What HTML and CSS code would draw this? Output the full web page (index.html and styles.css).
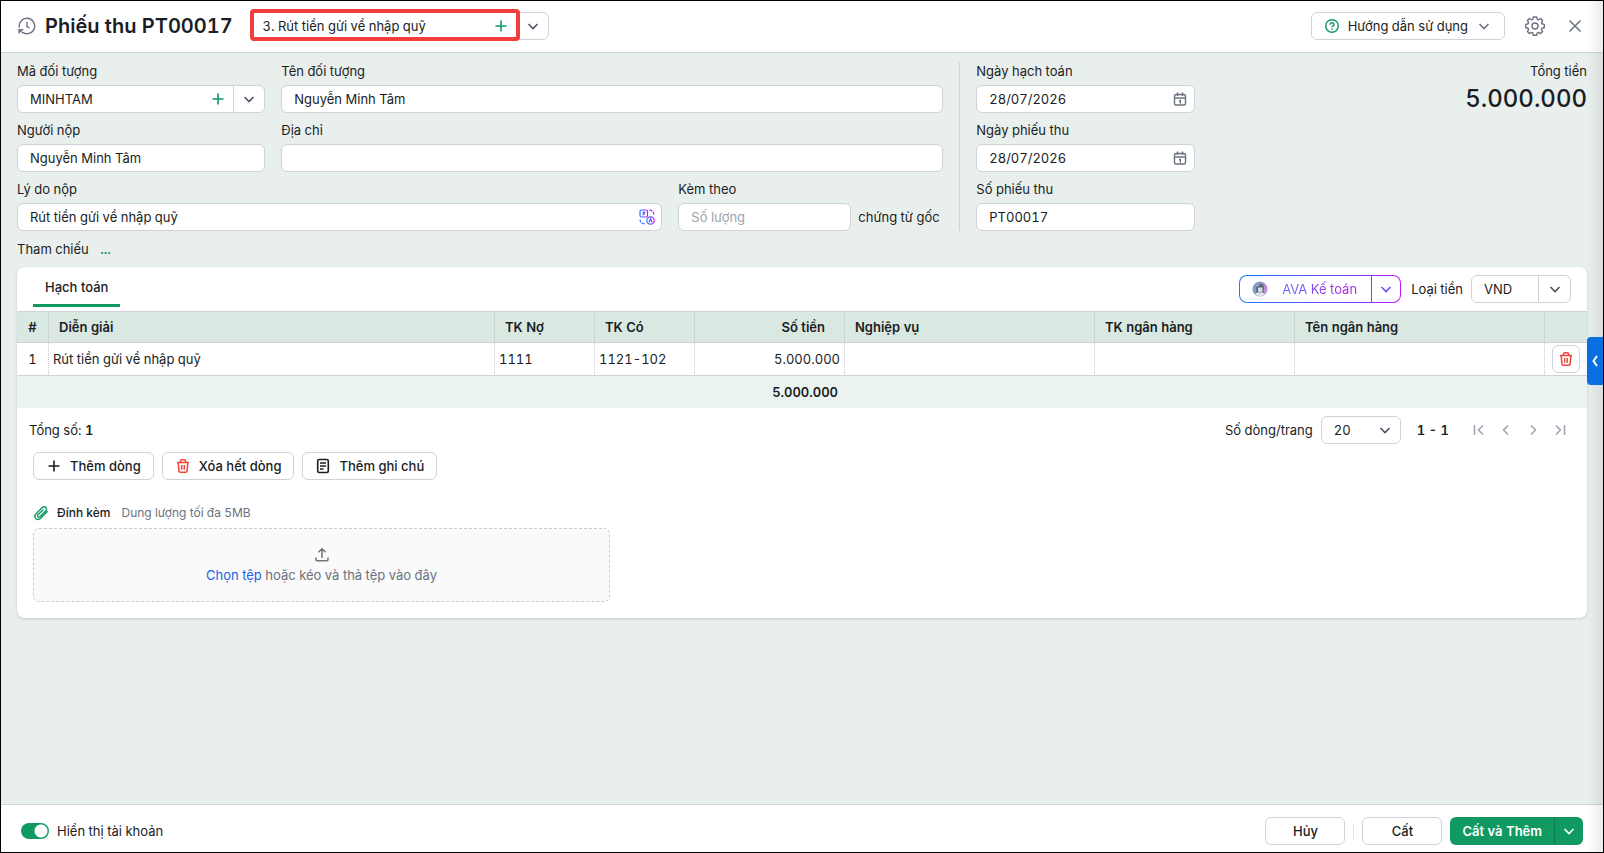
FILE: index.html
```html
<!DOCTYPE html>
<html lang="vi">
<head>
    <meta charset="UTF-8">
    <meta name="viewport" content="width=device-width, initial-scale=1.0">
    <title>Phiếu thu PT00017</title>
    <link rel="stylesheet" href="styles.css">
</head>
<body>
    <!-- Shared icons -->
    <svg class="sprite" aria-hidden="true">
        <defs>
            <linearGradient id="ava" x1="0" y1="0" x2="1" y2="0">
                <stop offset="0" stop-color="#1a7dff"/>
                <stop offset="1" stop-color="#b91aff"/>
            </linearGradient>
        </defs>
        <symbol id="chevron" viewBox="0 0 16 16">
            <path d="M3.5 6l4.500 4.500L12.500 6" fill="none" stroke="currentColor" stroke-width="1.6"/>
        </symbol>
        <symbol id="plus" viewBox="0 0 16 16">
            <path d="M8 2.500v11M2.500 8h11" fill="none" stroke="currentColor" stroke-width="1.600"/>
        </symbol>
        <symbol id="calendar" viewBox="0 0 16 16">
            <g fill="none" stroke="currentColor" stroke-width="1.400">
                <rect x="2.500" y="3.500" width="11" height="10.500" rx="1.500"/>
                <path d="M2.500 7h11M5.500 1.500v3.500M10.500 1.500v3.500M7 9.500h1.300v3"/>
            </g>
        </symbol>
        <symbol id="trash" viewBox="0 0 16 16">
            <g fill="none" stroke="currentColor" stroke-width="1.500">
                <path d="M2 4.500h12M5.500 4.300V3q0-1.300 1.300-1.300h2.400q1.300 0 1.300 1.300v1.300M3.200 4.700l.7 8.200q.1 1.300 1.400 1.300h5.400q1.300 0 1.400-1.300l.7-8.200M6.700 7v4.800M9.300 7v4.800"/>
            </g>
        </symbol>
    </svg>

    <header class="header">
        <button class="icon-btn" aria-label="Lịch sử">
            <svg width="18" height="18" viewBox="0 0 18 18" fill="none" stroke="currentColor" stroke-width="1.4">
                <path d="M1.400 10.500A7.700 7.700 0 1 1 5 15.600M1 16.500v-3.800h4.300M1 12.700q1.500 2.700 5.200 3.700M9 4.800V9.500l2.500 1.500"/>
            </svg>
        </button>
        <h1>Phiếu thu PT00017</h1>
        <div class="type-box">
            <select aria-label="Loại phiếu">
                <option>3. Rút tiền gửi về nhập quỹ</option>
            </select>
            <div class="highlight"></div>
            <button class="add-type" aria-label="Thêm"><svg class="icon"><use href="#plus"/></svg></button>
            <svg class="icon arrow"><use href="#chevron"/></svg>
        </div>
        <div class="header-right">
            <button class="btn help-btn">
                <svg class="icon green" viewBox="0 0 16 16" fill="none" stroke="currentColor" stroke-width="1.4">
                    <circle cx="8" cy="8" r="6.300"/>
                    <path d="M6 6.700q0-2 2-2t2 1.800q0 1-1 1.500t-1 1.300M8 10.600v1.400"/>
                </svg>
                Hướng dẫn sử dụng
                <svg class="icon gray"><use href="#chevron"/></svg>
            </button>
            <button class="icon-btn" aria-label="Thiết lập">
                <svg width="20" height="20" viewBox="0 0 20 20" fill="none" stroke="currentColor" stroke-width="1.4" stroke-linejoin="round">
                    <path d="M8.300 1h3.400l.6 2.300 1.200.5 2.100-1.300 2 2-1.200 2.100.5 1.200 2.400.6v3.300l-2.400.6-.5 1.200 1.200 2.100-2 2-2.100-1.200-1.200.5-.6 2.300H8.300l-.6-2.300-1.200-.5-2.100 1.200-2-2 1.200-2.100-.5-1.200L.8 11.700V8.400l2.300-.6.5-1.200-1.200-2.100 2-2 2.100 1.300 1.200-.5z"/>
                    <circle cx="10" cy="10" r="3"/>
                </svg>
            </button>
            <button class="icon-btn" aria-label="Đóng">
                <svg width="20" height="20" viewBox="0 0 20 20" fill="none" stroke="currentColor" stroke-width="1.5">
                    <path d="M4.500 4.500l11 11M15.500 4.500l-11 11"/>
                </svg>
            </button>
        </div>
    </header>

    <main class="content">
        <section class="form">
            <div class="form-left">
                <div class="row two-cols">
                    <div class="field">
                        <label for="code">Mã đối tượng</label>
                        <div class="control combo">
                            <input type="text" id="code" value="MINHTAM">
                            <button class="plain green" aria-label="Thêm đối tượng"><svg class="icon"><use href="#plus"/></svg></button>
                            <button class="plain drop" aria-label="Chọn đối tượng"><svg class="icon"><use href="#chevron"/></svg></button>
                        </div>
                    </div>
                    <div class="field">
                        <label for="name">Tên đối tượng</label>
                        <input class="control" type="text" id="name" value="Nguyễn Minh Tâm">
                    </div>
                </div>
                <div class="row two-cols">
                    <div class="field">
                        <label for="payer">Người nộp</label>
                        <input class="control" type="text" id="payer" value="Nguyễn Minh Tâm">
                    </div>
                    <div class="field">
                        <label for="address">Địa chỉ</label>
                        <input class="control" type="text" id="address">
                    </div>
                </div>
                <div class="row reason-row">
                    <div class="field">
                        <label for="reason">Lý do nộp</label>
                        <div class="control combo">
                            <input type="text" id="reason" value="Rút tiền gửi về nhập quỹ">
                            <button class="plain" aria-label="Dịch">
                                <svg class="icon" viewBox="0 0 16 16" fill="none" stroke="url(#ava)" stroke-width="1.2">
                                    <rect x="1" y="1" width="7.500" height="7" rx="1.500"/>
                                    <path d="M3.500 3.300h2.500M4.800 3v2.700M3.500 6l2.500-1.500"/>
                                    <circle cx="11.500" cy="11.500" r="3.700"/>
                                    <path d="M10 13.200l1.500-3.500 1.500 3.500"/>
                                    <path d="M10.500 1.200q3.800 0 4.300 4.300M1 10.500q.3 3.800 4.500 4.300" stroke-dasharray="3 1"/>
                                </svg>
                            </button>
                        </div>
                    </div>
                    <div class="field">
                        <label for="docs">Kèm theo</label>
                        <div class="docs">
                            <input class="control" type="text" id="docs" placeholder="Số lượng">
                            <span>chứng từ gốc</span>
                        </div>
                    </div>
                </div>
            </div>
            <div class="form-dates">
                <div class="field">
                    <label for="date1">Ngày hạch toán</label>
                    <div class="control combo">
                        <input type="text" id="date1" value="28/07/2026">
                        <button class="plain gray" aria-label="Chọn ngày"><svg class="icon"><use href="#calendar"/></svg></button>
                    </div>
                </div>
                <div class="field">
                    <label for="date2">Ngày phiếu thu</label>
                    <div class="control combo">
                        <input type="text" id="date2" value="28/07/2026">
                        <button class="plain gray" aria-label="Chọn ngày"><svg class="icon"><use href="#calendar"/></svg></button>
                    </div>
                </div>
                <div class="field">
                    <label for="number">Số phiếu thu</label>
                    <input class="control" type="text" id="number" value="PT00017">
                </div>
            </div>
            <div class="total">
                <div>Tổng tiền</div>
                <div class="total-value">5.000.000</div>
            </div>
        </section>

        <div class="reference">Tham chiếu <a href="#">...</a></div>

        <section class="card">
            <div class="tabs">
                <button class="tab">Hạch toán</button>
                <div class="tabs-right">
                    <div class="ava">
                        <button class="ava-main">
                            <svg class="icon" viewBox="0 0 16 16">
                                <defs>
                                    <linearGradient id="face">
                                        <stop offset="0" stop-color="#6fa3c8"/>
                                        <stop offset="1" stop-color="#c58bd8"/>
                                    </linearGradient>
                                </defs>
                                <circle cx="8" cy="8" r="7.500" fill="url(#face)"/>
                                <path d="M4 7q1-4.500 4.500-4.500T12 7l-.5 5q-3.500 2-7 0z" fill="#5b6878"/>
                                <path d="M6 6.500h4.500v3.500q-2.300 3-4.500 0z" fill="#d8dde3"/>
                                <path d="M3 13l3.500-2 1.500 1.500 1.500-1.500 3.500 2q-5 4-10 0z" fill="#e6ebef"/>
                                <path d="M6.500 8h1.200M8.800 8H10M4.500 5l3-1.500" stroke="#c7d3dc"/>
                            </svg>
                            <span>AVA Kế toán</span>
                        </button>
                        <button class="ava-drop" aria-label="Mở AVA"><svg class="icon"><use href="#chevron"/></svg></button>
                    </div>
                    <label for="currency">Loại tiền</label>
                    <div class="select-box split">
                        <select id="currency"><option>VND</option></select>
                        <svg class="icon arrow"><use href="#chevron"/></svg>
                    </div>
                </div>
            </div>

            <table>
                <colgroup>
                    <col class="col-index">
                    <col>
                    <col class="col-account">
                    <col class="col-account">
                    <col class="col-amount">
                    <col class="col-wide">
                    <col class="col-bank">
                    <col class="col-wide">
                    <col class="col-action">
                </colgroup>
                <thead>
                    <tr>
                        <th class="index">#</th>
                        <th>Diễn giải</th>
                        <th>TK Nợ</th>
                        <th>TK Có</th>
                        <th class="num">Số tiền</th>
                        <th>Nghiệp vụ</th>
                        <th>TK ngân hàng</th>
                        <th>Tên ngân hàng</th>
                        <th></th>
                    </tr>
                </thead>
                <tbody>
                    <tr>
                        <td class="index">1</td>
                        <td>Rút tiền gửi về nhập quỹ</td>
                        <td>1111</td>
                        <td>1121-102</td>
                        <td class="num">5.000.000</td>
                        <td></td>
                        <td></td>
                        <td></td>
                        <td class="action"><button class="btn delete-btn red" aria-label="Xóa dòng"><svg class="icon"><use href="#trash"/></svg></button></td>
                    </tr>
                </tbody>
                <tfoot>
                    <tr>
                        <td colspan="4"></td>
                        <td class="num">5.000.000</td>
                        <td colspan="4"></td>
                    </tr>
                </tfoot>
            </table>

            <div class="pager">
                <div>Tổng số: <b>1</b></div>
                <div class="pager-right">
                    <label for="size">Số dòng/trang</label>
                    <div class="select-box">
                        <select id="size"><option>20</option></select>
                        <svg class="icon arrow"><use href="#chevron"/></svg>
                    </div>
                    <b class="range">1 - 1</b>
                    <div class="pages">
                        <button class="plain" aria-label="Trang đầu"><svg class="icon" viewBox="0 0 16 16"><path d="M3.500 3v10M12 3.500L7.500 8l4.500 4.500"/></svg></button>
                        <button class="plain" aria-label="Trang trước"><svg class="icon" viewBox="0 0 16 16"><path d="M10 3.500L5.500 8l4.500 4.500"/></svg></button>
                        <button class="plain" aria-label="Trang sau"><svg class="icon" viewBox="0 0 16 16"><path d="M6 3.500L10.500 8 6 12.500"/></svg></button>
                        <button class="plain" aria-label="Trang cuối"><svg class="icon" viewBox="0 0 16 16"><path d="M4 3.500L8.500 8 4 12.500M12.500 3v10"/></svg></button>
                    </div>
                </div>
            </div>

            <div class="actions">
                <button class="btn"><svg class="icon"><use href="#plus"/></svg>Thêm dòng</button>
                <button class="btn"><svg class="icon red"><use href="#trash"/></svg>Xóa hết dòng</button>
                <button class="btn">
                    <svg class="icon" viewBox="0 0 16 16" fill="none" stroke="currentColor" stroke-width="1.6">
                        <rect x="2.700" y="1.500" width="10.600" height="13" rx="1.500"/>
                        <path d="M5 5h6M5 8h6M5 11h3.500" stroke-width="1.300"/>
                    </svg>
                    Thêm ghi chú
                </button>
            </div>

            <div class="attach">
                <svg class="icon green" viewBox="0 0 16 16" fill="none" stroke="currentColor" stroke-width="1.4" stroke-linecap="round">
                    <path d="M14.300 6.500l-6.400 6.600q-2.600 2.500-5 .6-2.300-2.400.2-5L9.200 2.600q1.800-1.700 3.600-.2 1.500 1.800-.2 3.500l-5.700 5.800q-1 .9-2 .1-.8-1 .1-2L10 4.900"/>
                </svg>
                <span class="attach-title">Đính kèm</span>
                <span class="hint">Dung lượng tối đa 5MB</span>
            </div>
            <div class="dropzone">
                <svg class="icon" viewBox="0 0 16 16" fill="none" stroke="currentColor" stroke-width="1.5">
                    <path d="M8 11V2M4.500 5.200L8 1.800l3.500 3.400M2 10.500v2q0 1.200 1.200 1.200h9.600q1.200 0 1.200-1.200v-2"/>
                </svg>
                <div><a href="#">Chọn tệp</a> hoặc kéo và thả tệp vào đây</div>
            </div>
        </section>

        <button class="side-tab" aria-label="Mở bảng bên">
            <svg width="8" height="14" viewBox="0 0 8 14" fill="none" stroke="currentColor" stroke-width="2"><path d="M6 2L2.500 7 6 12"/></svg>
        </button>
    </main>

    <footer class="footer">
        <label class="switch"><input type="checkbox" checked>Hiển thị tài khoản</label>
        <div class="footer-right">
            <button class="btn wide">Hủy</button>
            <span class="divider"></span>
            <button class="btn wide">Cất</button>
            <div class="save">
                <button class="save-main">Cất và Thêm</button>
                <button class="save-drop" aria-label="Thêm lựa chọn"><svg class="icon"><use href="#chevron"/></svg></button>
            </div>
        </div>
    </footer>
    <div class="edge-shadow"></div>
</body>
</html>
```
FILE: styles.css
```css
:root {
    --green: #119962;
    --red: #f04438;
    --text: #1a1d24;
    --gray: #6b7280;
    --border: #cfd2d8;
    --page: #e9efed;
}

* {
    box-sizing: border-box;
}

body {
    position: relative;
    display: flex;
    flex-direction: column;
    min-height: 100vh;
    margin: 0;
    border: 1px solid #000;
    background-color: var(--page);
    color: var(--text);
    font-family: Inter, "Liberation Sans", sans-serif;
    font-size: 13px;
    line-height: 16px;
    font-variant-numeric: tabular-nums;
}

button, input, select {
    font: inherit;
    font-variant-numeric: inherit;
    color: inherit;
}

button {
    cursor: pointer;
}

a {
    text-decoration: none;
}

.sprite {
    position: absolute;
    width: 0;
    height: 0;
}

.icon {
    flex: none;
    display: block;
    width: 16px;
    height: 16px;
}

.green {
    color: var(--green);
}

.red {
    color: var(--red);
}

.gray {
    color: var(--gray);
}

.plain, .icon-btn {
    display: flex;
    align-items: center;
    justify-content: center;
    padding: 0;
    border: none;
    background: none;
}

.icon-btn {
    color: var(--gray);
}

.btn {
    display: flex;
    align-items: center;
    justify-content: center;
    gap: 8px;
    height: 28px;
    padding: 0 12px;
    border: 1px solid var(--border);
    border-radius: 6px;
    background-color: #fff;
    font-weight: 500;
}

/* Header */
.header {
    display: flex;
    align-items: center;
    height: 52px;
    padding: 0 18px 1px 17px;
    border-bottom: 1px solid var(--border);
    background-color: #fff;
}

.header h1 {
    margin: 0 17px 0 9px;
    font-size: 20px;
    line-height: 24px;
    font-weight: 600;
}

.type-box, .select-box {
    position: relative;
}

.type-box {
    width: 299px;
}

.type-box select, .select-box select {
    display: block;
    width: 100%;
    height: 28px;
    padding: 0 12px;
    border: 1px solid var(--border);
    border-radius: 6px;
    background-color: #fff;
    appearance: none;
}

.arrow {
    position: absolute;
    top: 6px;
    right: 8px;
    color: #4b5563;
    pointer-events: none;
}

.highlight {
    position: absolute;
    top: -3px;
    left: 0;
    width: 270px;
    height: 32px;
    border: 4px solid #f23d3d;
    border-radius: 4px;
    pointer-events: none;
}

.add-type {
    position: absolute;
    top: 6px;
    right: 40px;
    padding: 0;
    border: none;
    background: none;
    color: var(--green);
}

.header-right {
    display: flex;
    align-items: center;
    gap: 20px;
    margin-left: auto;
}

.help-btn {
    font-weight: 400;
}

/* Form */
.content {
    position: relative;
    flex: 1;
    padding: 9px 16px 16px;
}

.form {
    display: flex;
}

.form-left {
    flex: 0 0 59%;
}

.form-left, .form-dates {
    display: flex;
    flex-direction: column;
    gap: 8px;
}

.row {
    display: grid;
    column-gap: 16px;
}

.two-cols {
    grid-template-columns: minmax(0, 3fr) minmax(0, 8fr);
}

.reason-row {
    grid-template-columns: 1fr 265px;
}

.form-dates {
    flex: 0 0 236px;
    min-width: 0;
    margin-left: 16px;
    padding-left: 16px;
    border-left: 1px solid var(--border);
}

.field label {
    display: block;
    padding: 3px 0 8px;
    line-height: 12px;
}

.control {
    display: block;
    width: 100%;
    height: 28px;
    padding: 0 12px;
    border: 1px solid var(--border);
    border-radius: 6px;
    background-color: #fff;
}

.control::placeholder {
    color: #9ca3af;
}

.combo {
    display: flex;
    align-items: center;
    gap: 7px;
    padding: 0 6px 0 12px;
}

.combo input {
    flex: 1;
    width: 100%;
    min-width: 0;
    padding: 0;
    border: none;
    outline: none;
    background: none;
}

.combo .drop {
    height: 26px;
    padding: 0 1px 0 7px;
    border-left: 1px solid var(--border);
    color: #4b5563;
}

.docs {
    display: flex;
    align-items: center;
    gap: 7px;
}

.docs .control {
    width: 173px;
}

.total {
    flex: 1;
    padding-top: 1px;
    text-align: right;
}

.total-value {
    margin-top: 6px;
    font-size: 24px;
    line-height: 28px;
    font-weight: 500;
}

.reference {
    margin: 10px 0;
}

.reference a {
    margin-left: 8px;
    color: var(--green);
    font-weight: 600;
}

/* Card */
.card {
    overflow: hidden;
    padding-bottom: 16px;
    border-radius: 8px;
    background-color: #fff;
    box-shadow: 0 1px 3px rgba(0, 0, 0, 0.15);
}

.tabs {
    display: flex;
    align-items: center;
    justify-content: space-between;
    height: 44px;
    padding: 0 16px;
}

.tab {
    align-self: flex-start;
    height: 40px;
    padding: 2px 12px 0;
    border: none;
    border-bottom: 3px solid var(--green);
    background: none;
    font-weight: 500;
}

.tabs-right {
    display: flex;
    align-items: center;
}

.tabs-right label {
    margin: 0 8px 0 10px;
}

.tabs-right .select-box {
    width: 100px;
}

.split::after {
    content: "";
    position: absolute;
    top: 0;
    right: 32px;
    height: 28px;
    border-left: 1px solid var(--border);
}

.ava {
    display: flex;
    width: 162px;
    height: 28px;
    border: 1px solid transparent;
    border-radius: 8px;
    background: linear-gradient(#fff, #fff) padding-box, linear-gradient(90deg, #1a7dff, #7a45ff 65%, #c01aff) border-box;
}

.ava button {
    display: flex;
    align-items: center;
    padding: 0;
    border: none;
    background: none;
}

.ava .ava-main {
    flex: 1;
    gap: 14px;
    padding-left: 12px;
}

.ava-main span {
    background: linear-gradient(90deg, #6a6cff, #b51fe8);
    background-clip: text;
    color: transparent;
}

.ava .ava-drop {
    padding: 0 6px;
    border-left: 1px solid #9a33ff;
    color: #7a4dff;
}

/* Table */
table {
    width: 100%;
    table-layout: fixed;
    border-collapse: separate;
    border-spacing: 0;
}

.col-index {
    width: 32px;
}

.col-account {
    width: 100px;
}

.col-amount {
    width: 150px;
}

.col-bank {
    width: 200px;
}

.col-wide {
    width: 250px;
}

.col-action {
    width: 42px;
}

th {
    height: 32px;
    padding: 0 10px;
    border: solid var(--border);
    border-width: 1px 1px 1px 0;
    background-color: #d9e8e1;
    font-weight: 600;
    text-align: left;
}

td {
    height: 33px;
    padding: 0 4px;
}

tbody td {
    border-right: 1px dotted #c4c7cc;
    border-bottom: 1px solid var(--border);
}

th:last-child, tbody td:last-child {
    border-right: none;
}

.index {
    padding: 0;
    text-align: center;
}

.num {
    text-align: right;
}

th.num {
    padding-right: 19px;
}

tfoot td {
    height: 32px;
    background-color: #eaf3f0;
    font-weight: 600;
}

tfoot .num {
    padding-right: 7px;
}

.action {
    padding: 0 7px;
}

.delete-btn {
    width: 28px;
    padding: 0;
}

/* Pager */
.pager {
    display: flex;
    align-items: center;
    justify-content: space-between;
    height: 44px;
    padding: 0 19px 0 12px;
}

.pager-right, .pages {
    display: flex;
    align-items: center;
}

.pager b {
    font-weight: 600;
}

.pager .select-box {
    width: 80px;
    margin-left: 8px;
}

.range {
    margin: 0 22px 0 16px;
}

.pages {
    gap: 11px;
    color: #9ca3af;
}

.pages path {
    fill: none;
    stroke: currentColor;
    stroke-width: 1.5;
}

.actions {
    display: flex;
    gap: 8px;
    padding: 0 16px;
}

.attach {
    display: flex;
    align-items: center;
    margin: 25px 16px 7px;
    font-size: 12px;
}

.attach-title {
    margin: 0 11px 0 8px;
    font-weight: 500;
}

.hint {
    color: var(--gray);
}

.dropzone {
    display: flex;
    flex-direction: column;
    align-items: center;
    justify-content: center;
    gap: 4px;
    width: 577px;
    max-width: calc(100% - 32px);
    height: 74px;
    margin-left: 16px;
    border: 1px dashed #c9ccd1;
    border-radius: 6px;
    background-color: #fafafa;
    color: var(--gray);
}

.dropzone a {
    color: #2563eb;
}

.side-tab {
    position: absolute;
    z-index: 2;
    top: 284px;
    right: 0;
    display: flex;
    align-items: center;
    justify-content: center;
    width: 16px;
    height: 48px;
    padding: 0;
    border: none;
    border-radius: 4px 0 0 4px;
    background-color: #0a6fe0;
    color: #fff;
}

.edge-shadow {
    position: absolute;
    top: 0;
    right: 0;
    bottom: 0;
    width: 16px;
    background: linear-gradient(90deg, transparent, rgba(60, 70, 60, 0.1));
    pointer-events: none;
}

/* Footer */
.footer {
    display: flex;
    align-items: center;
    justify-content: space-between;
    height: 48px;
    padding: 4px 20px 0;
    border-top: 1px solid var(--border);
    background-color: #fff;
}

.switch {
    display: flex;
    align-items: center;
    gap: 8px;
}

.switch input {
    width: 28px;
    height: 16px;
    margin: 0;
    border-radius: 8px;
    background: radial-gradient(circle at 20px 8px, #fff 6px, var(--green) 7px);
    appearance: none;
}

.switch input:not(:checked) {
    background: radial-gradient(circle at 8px 8px, #fff 6px, #9ca3af 7px);
}

.footer-right, .save {
    display: flex;
    align-items: center;
}

.footer-right {
    gap: 8px;
}

.wide {
    width: 80px;
}

.divider {
    width: 1px;
    height: 16px;
    background-color: #e0e2e6;
}

.save button {
    height: 28px;
    border: none;
    background-color: var(--green);
    color: #fff;
    font-weight: 600;
}

.save-main {
    padding: 0 12px;
    border-radius: 6px 0 0 6px;
}

.save .save-drop {
    padding: 0 6px;
    border-left: 1px solid #0b7d4f;
    border-radius: 0 6px 6px 0;
}
```
